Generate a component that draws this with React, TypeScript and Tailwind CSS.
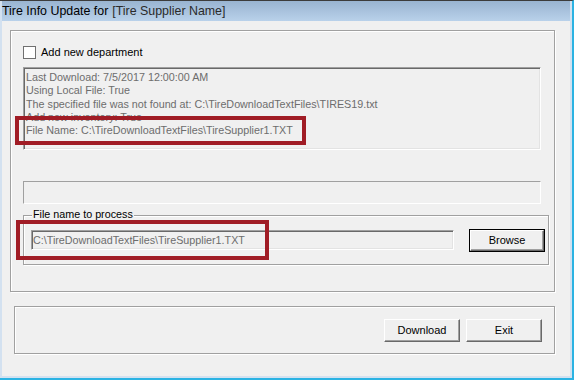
import React from 'react';

const font = { fontFamily: '"Liberation Sans", Arial, sans-serif' };

const logLines = [
  'Last Download: 7/5/2017 12:00:00 AM',
  'Using Local File: True',
  'The specified file was not found at: C:\\TireDownloadTextFiles\\TIRES19.txt',
  'Add new inventory: True',
  'File Name: C:\\TireDownloadTextFiles\\TireSupplier1.TXT',
];

function WinButton({ label, isDefault }: { label: string; isDefault?: boolean }) {
  if (isDefault) {
    return (
      <div className="w-[76px] h-[23px] border border-black">
        <div className="w-full h-full border-t border-l border-t-white border-l-white border-b border-r border-b-[#696969] border-r-[#696969] shadow-[inset_-1px_-1px_0_#a0a0a0] bg-[#f0f0f0] flex items-center justify-center text-[11px] text-black">
          {label}
        </div>
      </div>
    );
  }
  return (
    <div className="w-[76px] h-[23px] border-t border-l border-t-white border-l-white border-b border-r border-b-[#696969] border-r-[#696969] shadow-[inset_-1px_-1px_0_#a0a0a0] bg-[#f0f0f0] flex items-center justify-center text-[11px] text-black">
      {label}
    </div>
  );
}

export default function App() {
  return (
    <div className="relative w-[574px] h-[380px] border-t border-t-[#3c3c3c] border-r-2 border-b-2 border-r-[#2bb3e3] border-b-[#2bb3e3]" style={font}>
      <div className="h-full flex flex-col border-l-2 border-r-2 border-b-2 border-[#d3e1f0] bg-[#f0f0f0]">
        {/* title bar */}
        <div className="h-[20px] bg-linear-to-b from-[#99b4d1] to-[#b9d1ea] flex items-center text-[12.4px] text-black leading-none">
          <span>Tire Info Update for</span>
          <span className="ml-[4px] text-[#2a2a2a]">[Tire Supplier Name]</span>
        </div>

        {/* client */}
        <div className="flex-1 flex flex-col">
          <div className="ml-[8px] mt-[9px] w-[545px] h-[262px] border border-[#a0a0a0] shadow-[inset_1px_1px_0_#fff,1px_1px_0_#fff] pl-[12px] pt-[15px]">
            <div className="flex items-center h-[13px]">
              <div className="w-[13px] h-[13px] border border-[#707070] bg-white" />
              <span className="ml-[5px] text-[11px] text-black leading-[13px]">Add new department</span>
            </div>

            <div className="mt-[8px] w-[518px] h-[83px] border-t border-l border-[#a0a0a0] border-b border-r border-b-white border-r-white shadow-[inset_1px_1px_0_#696969,inset_-1px_-1px_0_#e3e3e3] overflow-hidden pl-[2px] pt-[3px]">
              {logLines.map((l) => (
                <div key={l} className="text-[10.75px] leading-[13.25px] text-[#6d6d6d] whitespace-nowrap">
                  {l}
                </div>
              ))}
            </div>

            <div className="mt-[31px] w-[518px] h-[23px] border-t border-l border-[#a0a0a0] border-b border-r border-b-white border-r-white" />

            <div className="relative mt-[11px] w-[526px] h-[50px] border border-[#a0a0a0] shadow-[inset_1px_1px_0_#fff,1px_1px_0_#fff] pl-[7px] pt-[14px] flex items-start">
              <span className="absolute left-[8px] top-[-8px] px-[1px] bg-[#f0f0f0] text-[10.75px] leading-[13px] text-black">
                File name to process
              </span>
              <div className="w-[423px] h-[20px] border-t border-l border-[#a0a0a0] border-b border-r border-b-white border-r-white shadow-[inset_1px_1px_0_#696969,inset_-1px_-1px_0_#e3e3e3] flex items-center pl-[1px] text-[10.75px] text-[#6d6d6d]">
                C:\TireDownloadTextFiles\TireSupplier1.TXT
              </div>
              <div className="ml-[15px] -mt-[1px]">
                <WinButton label="Browse" isDefault />
              </div>
            </div>
          </div>

          <div className="ml-[12px] mt-[14px] w-[541px] h-[48px] border border-[#a0a0a0] shadow-[inset_1px_1px_0_#fff,1px_1px_0_#fff] flex justify-end gap-[6px] pr-[12px] pt-[12px]">
            <WinButton label="Download" />
            <WinButton label="Exit" />
          </div>
        </div>
      </div>

      {/* red annotation boxes */}
      <div className="absolute left-[15px] top-[115px] w-[291px] h-[29px] border-4 border-[#a01c25]" />
      <div className="absolute left-[16px] top-[219px] w-[253px] h-[40px] border-4 border-[#a01c25]" />
    </div>
  );
}
